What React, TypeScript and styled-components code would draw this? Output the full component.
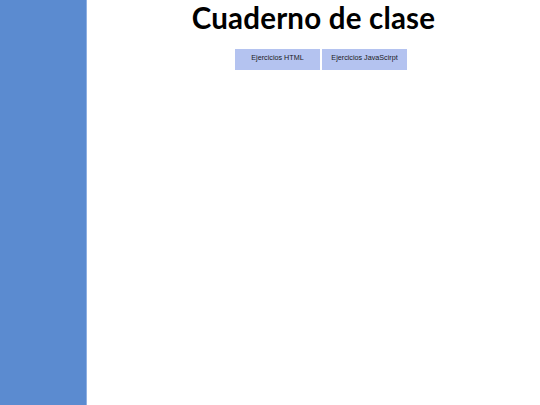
import styled, { createGlobalStyle } from 'styled-components';

const GlobalStyle = createGlobalStyle`
  html, body {
    margin: 0;
    padding: 0;
    background: #ffffff;
  }
  #root {
    min-height: 100vh;
  }
`;

const Page = styled.div`
  display: flex;
  min-height: 100vh;
`;

const Sidebar = styled.aside`
  width: 86px;
  flex-shrink: 0;
  background: #5b8bd0;
  border-right: 1px solid #8fb0e2;
`;

const Main = styled.main`
  flex: 1;
  display: flex;
  flex-direction: column;
  align-items: center;
`;

const Title = styled.h1`
  margin: 0;
  font-family: 'Lato', 'Open Sans', sans-serif;
  font-weight: 700;
  font-size: 29.5px;
  line-height: 36px;
  color: #000000;
  letter-spacing: 0.2px;
`;

const Nav = styled.nav`
  display: flex;
  gap: 2px;
  margin-top: 13px;
  padding-left: 15px;
`;

const NavButton = styled.a`
  display: flex;
  justify-content: center;
  width: 85px;
  height: 21px;
  box-sizing: border-box;
  padding-top: 4px;
  background: #b4c3f0;
  font-family: 'Liberation Sans', Arial, sans-serif;
  font-size: 7.2px;
  line-height: 9px;
  color: #1a1a1a;
  text-decoration: none;
  cursor: pointer;
`;

const links = ['Ejercicios HTML', 'Ejercicios JavaScirpt'];

export default function App() {
  return (
    <>
      <GlobalStyle />
      <Page>
        <Sidebar />
        <Main>
          <Title>Cuaderno de clase</Title>
          <Nav>
            {links.map((l) => (
              <NavButton key={l}>{l}</NavButton>
            ))}
          </Nav>
        </Main>
      </Page>
    </>
  );
}
